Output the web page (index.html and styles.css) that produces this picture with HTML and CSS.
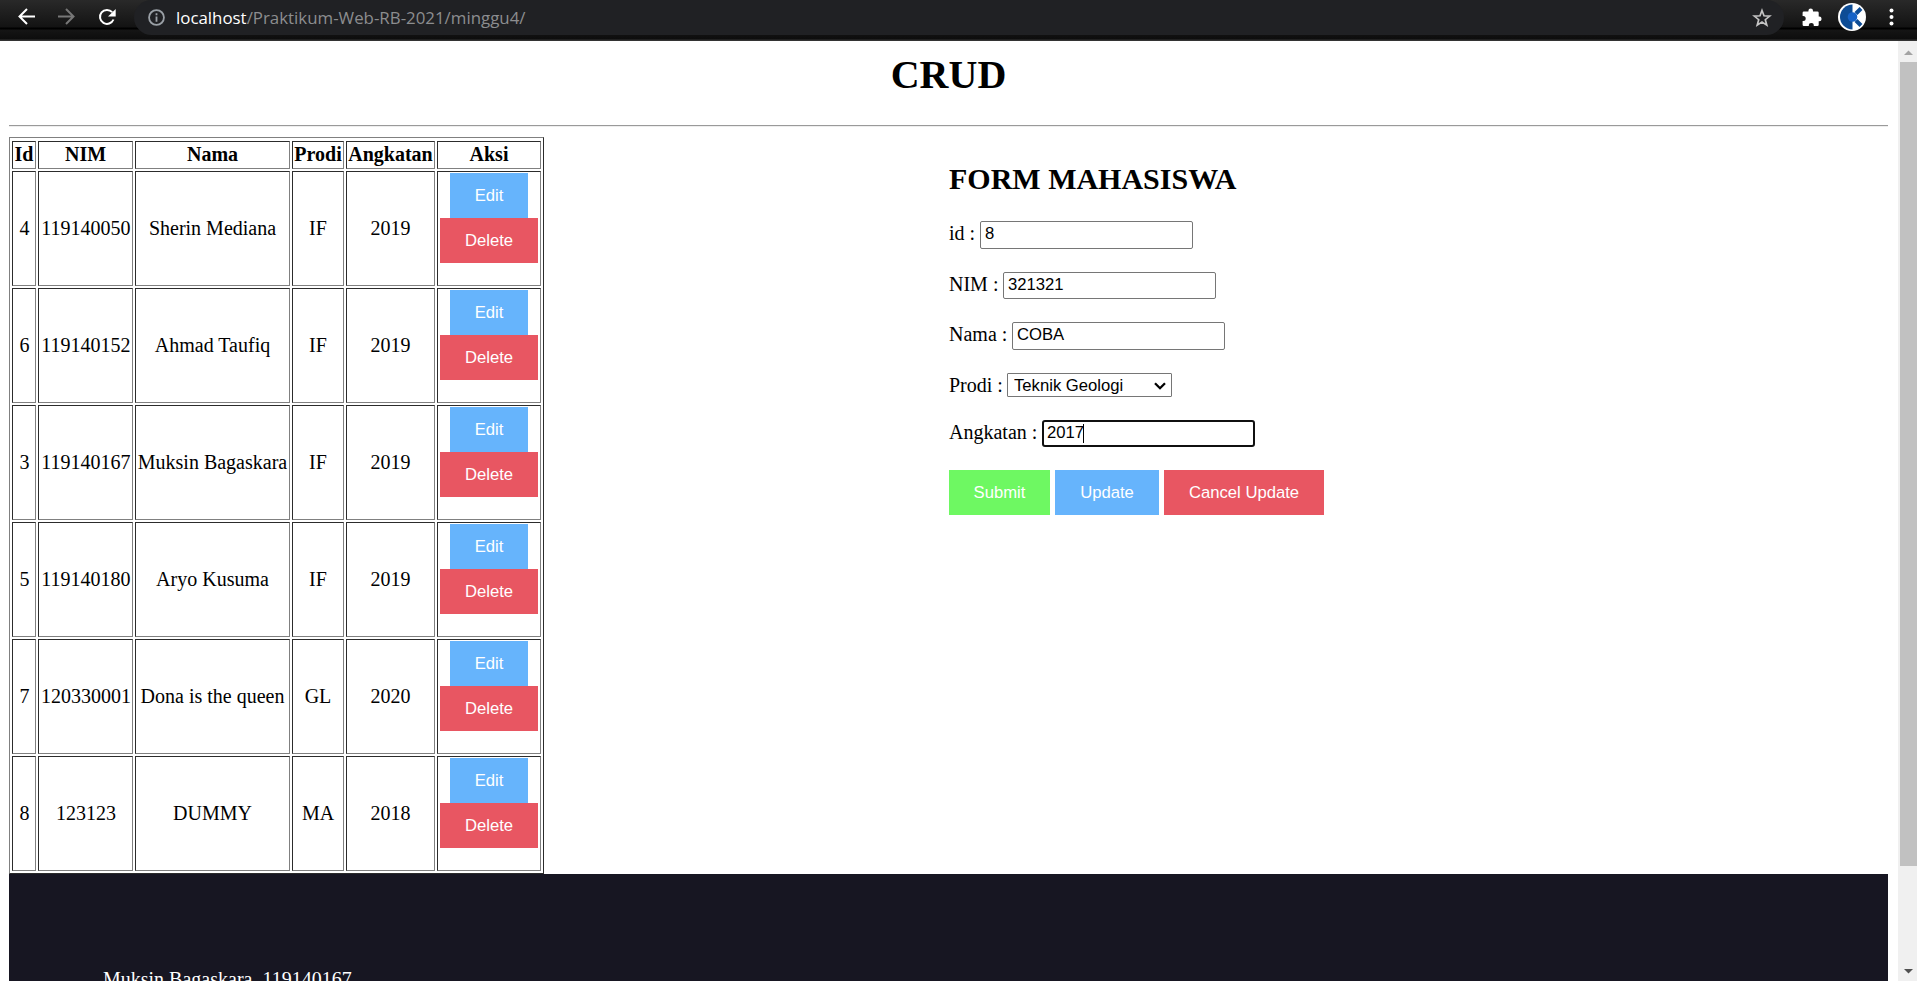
FILE: index.html
```
<!DOCTYPE html>
<html lang="id">
<head>
<meta charset="utf-8">
<title>CRUD</title>
<link rel="stylesheet" href="styles.css">
</head>
<body>
<header class="toolbar">
  <nav class="nav">
    <svg width="134" height="36" viewBox="0 0 134 36" fill="none" stroke="#fff" stroke-width="2">
      <path d="M35 16.500H19.500M27 9L19.500 16.500L27 24"/>
      <path stroke="#777" d="M58 16.500H73.500M66 9L73.500 16.500L66 24"/>
      <path d="M112.200 12.200A7 7 0 1 0 113.500 19.500"/>
      <path fill="#fff" stroke="none" d="M115.700 9V16.500H108Z"/>
    </svg>
  </nav>
  <div class="omnibox">
    <svg class="info" width="17" height="17" viewBox="0 0 16 16" fill="none" stroke="#9aa0a6" stroke-width="1.700"><circle cx="8" cy="8" r="7"/><path d="M8 7V12M8 4V5.800"/></svg>
    <span class="url"><span class="host">localhost</span><span class="path">/Praktikum-Web-RB-2021/minggu4/</span></span>
    <svg class="star" width="20" height="20" viewBox="0 0 20 20" fill="none" stroke="#c4c4c4" stroke-width="1.700"><path d="M10 2.500L12 7.800L17.700 8.100L13.300 11.700L14.800 17.200L10 14.100L5.200 17.200L6.700 11.700L2.300 8.100L8 7.800Z"/></svg>
  </div>
  <div class="actions">
    <svg width="133" height="36" viewBox="1784 0 133 36">
      <path fill="#fff" transform="translate(-.6 0)" d="M1804.500 11.500h4.500v-.7a2.300 2.300 0 0 1 4.600 0v.7h4.400q1.300 0 1.300 1.300v3.700h.5a2.400 2.400 0 0 1 0 4.800h-.5v3.500q0 1.300-1.300 1.300h-3.600v-.6a2.500 2.500 0 0 0-5 0v.6h-4.900q-1.300 0-1.300-1.300v-3.700h.6a2.500 2.500 0 0 0 0-5h-.6v-3.300q0-1.300 1.300-1.300z"/>
      <circle cx="1852" cy="17" r="14" fill="#fff"/>
      <path fill="#0d4c95" d="M1852.500 4.500A12.500 12.500 0 0 0 1852.500 29.500Z"/>
      <path stroke="#0d4c95" stroke-width="4" d="M1856 13.500L1861 8.500M1856 20.500L1861 25.500"/>
      <circle cx="1852.500" cy="17" r="4.800" fill="#1763c7"/>
      <g fill="#fff"><circle cx="1891.500" cy="10.500" r="2"/><circle cx="1891.500" cy="17" r="2"/><circle cx="1891.500" cy="23.500" r="2"/></g>
    </svg>
  </div>
</header>
<div class="viewport">
<main class="page">
  <h1 class="title">CRUD</h1>
  <hr class="rule">
  <div class="columns">
    <div class="half">
      <table class="data">
        <colgroup><col class="c-id"><col class="c-nim"><col class="c-nama"><col class="c-prodi"><col class="c-angkatan"><col class="c-aksi"></colgroup>
        <thead><tr><th>Id</th><th>NIM</th><th>Nama</th><th>Prodi</th><th>Angkatan</th><th>Aksi</th></tr></thead>
        <tbody>
          <tr><td>4</td><td>119140050</td><td>Sherin Mediana</td><td>IF</td><td>2019</td><td class="aksi"><button class="btn edit">Edit</button><button class="btn delete">Delete</button></td></tr>
          <tr><td>6</td><td>119140152</td><td>Ahmad Taufiq</td><td>IF</td><td>2019</td><td class="aksi"><button class="btn edit">Edit</button><button class="btn delete">Delete</button></td></tr>
          <tr><td>3</td><td>119140167</td><td>Muksin Bagaskara</td><td>IF</td><td>2019</td><td class="aksi"><button class="btn edit">Edit</button><button class="btn delete">Delete</button></td></tr>
          <tr><td>5</td><td>119140180</td><td>Aryo Kusuma</td><td>IF</td><td>2019</td><td class="aksi"><button class="btn edit">Edit</button><button class="btn delete">Delete</button></td></tr>
          <tr><td>7</td><td>120330001</td><td>Dona is the queen</td><td>GL</td><td>2020</td><td class="aksi"><button class="btn edit">Edit</button><button class="btn delete">Delete</button></td></tr>
          <tr><td>8</td><td>123123</td><td>DUMMY</td><td>MA</td><td>2018</td><td class="aksi"><button class="btn edit">Edit</button><button class="btn delete">Delete</button></td></tr>
        </tbody>
      </table>
    </div>
    <form class="form">
      <h2 class="form-title">FORM MAHASISWA</h2>
      <div class="field f-id"><label>id :</label><input type="text" value="8"></div>
      <div class="field f-nim"><label>NIM :</label><input type="text" value="321321"></div>
      <div class="field f-nama"><label>Nama :</label><input type="text" value="COBA"></div>
      <div class="field f-prodi"><label>Prodi :</label><span class="select"><select><option>Teknik Geologi</option></select><svg class="chevron" width="12" height="8" viewBox="0 0 12 8" fill="none" stroke="#000" stroke-width="2.300"><path d="M1 1.200L6 6.200L11 1.200"/></svg></span></div>
      <div class="field f-angkatan"><label>Angkatan :</label><span class="focus"><input type="text" value="2017"></span></div>
      <div class="buttons"><button type="button" class="btn submit">Submit</button><button type="button" class="btn update">Update</button><button type="button" class="btn cancel">Cancel Update</button></div>
    </form>
  </div>
  <footer class="footer">Muksin Bagaskara, 119140167</footer>
</main>
<aside class="scrollbar">
  <svg class="up" width="17" height="21" viewBox="0 0 17 21"><path fill="#a3a3a3" d="M4 14L8.500 9.500L13 14Z"/></svg>
  <div class="thumb"></div>
  <svg class="down" width="17" height="21" viewBox="0 0 17 21"><path fill="#505050" d="M4 9H13L8.500 13.500Z"/></svg>
</aside>
</div>
</body>
</html>
```
FILE: styles.css
```
* { box-sizing: border-box; }
body {
  margin: 0;
  height: 981px;
  overflow: hidden;
  background: #fff;
  color: #000;
  font: 20px "Liberation Serif", serif;
}
.toolbar {
  display: flex;
  height: 41px;
  background: linear-gradient(#292929 0, #131313 27px, #000 28px, #000 29px, #151515 30px, #0d0d0d 39px, #333 40px);
}
.toolbar svg { display: block; }
.nav { width: 134px; }
.omnibox {
  display: flex;
  align-items: center;
  width: 1650px;
  height: 35px;
  padding: 0 12px 0 14px;
  border-radius: 18px;
  background: #202124;
}
.url {
  flex: 1;
  margin-left: 11px;
  font: 16.87px "Open Sans", sans-serif;
  white-space: nowrap;
}
.host { color: #fff; }
.path { color: #8c8d8f; }
.viewport { display: flex; height: 940px; overflow: hidden; }
.page { width: 1898px; padding: 0 10px 0 9px; }
.title {
  margin: 0;
  padding-top: 11px;
  height: 84px;
  font-size: 40px;
  line-height: 46px;
  text-align: center;
}
.rule {
  height: 2px;
  margin: 0;
  border: 0;
  border-top: 1px solid #9a9a9a;
  border-bottom: 1px solid #eee;
}
.columns { display: flex; padding-top: 10px; height: 747px; }
.half { width: 940px; }
.data {
  table-layout: fixed;
  width: 535px;
  height: 737px;
  padding-top: 1px;
  border: 1px solid #808080;
  border-right-color: #2c2c2c;
  border-bottom-color: #2c2c2c;
  border-spacing: 2px;
  text-align: center;
}
.c-id { width: 24px; }
.c-nim { width: 95px; }
.c-nama { width: 155px; }
.c-prodi { width: 52px; }
.c-angkatan { width: 89px; }
.c-aksi { width: 104px; }
.data th, .data td {
  padding: 0;
  border: 1px solid #2c2c2c;
  border-right-color: #808080;
  border-bottom-color: #808080;
  white-space: nowrap;
}
.data th { height: 28px; padding-bottom: 2px; line-height: 24px; }
.data td { height: 115px; }
.data td:nth-child(-n+2) { padding-left: 1px; }
.data .aksi { vertical-align: top; padding-top: 1px; }
.aksi .btn { display: block; margin: 0 auto; }
.btn {
  height: 45px;
  padding: 0;
  border: 0;
  color: #fff;
  font: 16.67px "Liberation Sans", sans-serif;
}
.edit { width: 78px; background: #66b4fc; }
.delete { width: 98px; background: #e85662; }
.form-title { margin: 0 0 25px; padding-top: 24px; font-size: 30px; line-height: 35px; }
.field { display: flex; align-items: flex-start; }
.field label { line-height: 25px; white-space: nowrap; }
.field input {
  display: block;
  width: 213px;
  height: 100%;
  padding: 0 4px 2px;
  border: 1px solid #767676;
  border-radius: 2px;
  background: #fff;
  color: #000;
  font: 16.67px "Liberation Sans", sans-serif;
}
.f-id { height: 28px; margin-bottom: 23px; }
.f-id label { width: 31px; }
.f-nim { height: 27px; margin-bottom: 23px; }
.f-nim label { width: 54px; }
.f-nama { height: 28px; margin-bottom: 23px; }
.f-nama label { width: 63px; }
.f-prodi { height: 24px; margin-bottom: 23px; }
.f-prodi label { width: 58px; line-height: 24px; }
.f-angkatan { height: 27px; margin-bottom: 23px; }
.f-angkatan label { width: 93px; }
.select { position: relative; width: 165px; height: 24px; }
.select select {
  display: block;
  appearance: none;
  width: 100%;
  height: 100%;
  padding: 0 6px;
  border: 1px solid #767676;
  border-radius: 1px;
  background: #fff;
  color: #000;
  font: 16.67px "Liberation Sans", sans-serif;
}
.chevron { position: absolute; right: 6px; top: 9px; }
.focus { position: relative; height: 100%; }
.focus input { border: 2px solid #101010; border-radius: 3px; padding: 0 3px 1px; }
.focus::after {
  content: "";
  position: absolute;
  left: 41px;
  top: 4px;
  width: 1px;
  height: 19px;
  background: #000;
}
.buttons { display: flex; gap: 5px; }
.submit { width: 101px; background: #6ef862; }
.update { width: 104px; background: #66b4fc; }
.cancel { width: 160px; background: #e85662; }
.footer { height: 300px; padding: 94px; background: #171622; color: #fff; line-height: 23px; }
.scrollbar { display: flex; flex-direction: column; width: 19px; padding-left: 2px; background: #f0f0f0; }
.thumb { height: 804px; background: #c1c1c1; }
.down { margin-top: auto; }
```
